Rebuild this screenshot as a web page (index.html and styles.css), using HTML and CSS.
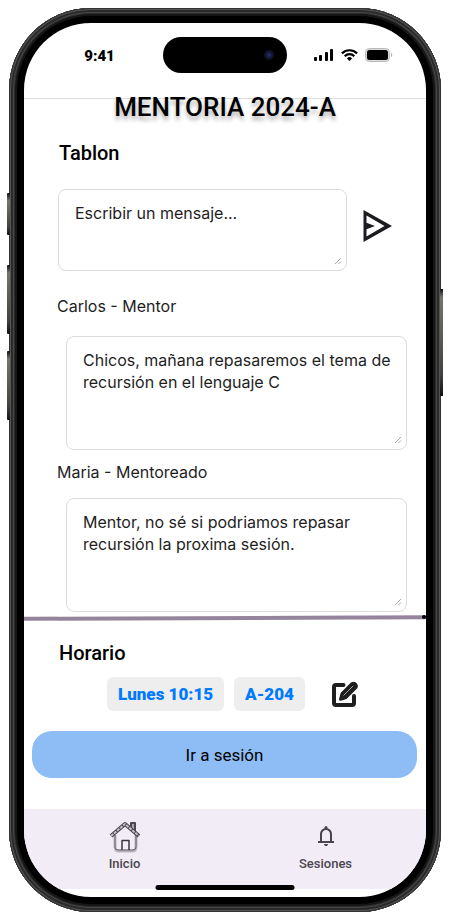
FILE: index.html
```html
<!DOCTYPE html>
<html lang="es">
<head>
<meta charset="utf-8">
<meta name="viewport" content="width=device-width, initial-scale=1">
<title>Mentoria 2024-A</title>
<link rel="stylesheet" href="styles.css">
</head>
<body>
<div class="phone">
  <span class="key key-action"></span>
  <span class="key key-up"></span>
  <span class="key key-down"></span>
  <span class="key key-power"></span>
  <div class="screen">
    <header class="status">
      <span class="clock">9:41</span>
      <span class="island"><span class="camera"></span></span>
      <span class="signals">
        <svg width="20" height="12" viewBox="0 0 20 12" aria-hidden="true"><rect x="0" y="8" width="3" height="4" rx="1"/><rect x="5" y="6" width="3" height="6" rx="1"/><rect x="11" y="3" width="3" height="9" rx="1"/><rect x="16" y="0" width="3" height="12" rx="1"/></svg>
        <svg width="17" height="12" viewBox="0 0 17 12" aria-hidden="true"><g fill="none" stroke="#000" stroke-width="2.200"><path d="M.9 4.400a10.800 10.800 0 0 1 15.200 0"/><path d="M3.700 7.200a6.800 6.800 0 0 1 9.600 0"/></g><path d="M8.500 12 5.900 9.400a3.700 3.700 0 0 1 5.200 0z"/></svg>
        <svg width="28" height="14" viewBox="0 0 28 14" aria-hidden="true"><rect x=".5" y=".5" width="24" height="13" rx="4" fill="#ddd" stroke="#b9b9b9"/><rect x="2" y="2" width="21" height="10" rx="2.500"/><path d="M26 4.700c1.600.6 1.600 4 0 4.600z" fill="#b5b5b5"/></svg>
      </span>
    </header>
    <main>
      <h1>MENTORIA 2024-A</h1>
      <section class="board">
        <h2>Tablon</h2>
        <form class="composer">
          <div class="field">
            <textarea class="box" aria-label="Mensaje" placeholder="Escribir un mensaje..."></textarea>
            <svg class="grip" width="8" height="8" viewBox="0 0 8 8" aria-hidden="true"><path d="M1 7 7 1M4.500 7 7 4.500"/></svg>
          </div>
          <button class="icon-button send" type="button" aria-label="Enviar">
            <svg width="30" height="34" viewBox="0 0 30 34" aria-hidden="true"><path fill="#1d1b20" fill-rule="evenodd" d="M.5 1v32L29 17zM3.500 6.600 21.500 17 3.500 27.400V20.200L12 17 3.500 13.800z"/></svg>
          </button>
        </form>
        <label class="author" for="msg-carlos">Carlos - Mentor</label>
        <div class="field message first">
          <textarea class="box tall" id="msg-carlos" readonly>Chicos, mañana repasaremos el tema de recursión en el lenguaje C</textarea>
          <svg class="grip" width="8" height="8" viewBox="0 0 8 8" aria-hidden="true"><path d="M1 7 7 1M4.500 7 7 4.500"/></svg>
        </div>
        <label class="author next" for="msg-maria">Maria - Mentoreado</label>
        <div class="field message">
          <textarea class="box tall" id="msg-maria" readonly>Mentor, no sé si podriamos repasar recursión la proxima sesión.</textarea>
          <svg class="grip" width="8" height="8" viewBox="0 0 8 8" aria-hidden="true"><path d="M1 7 7 1M4.500 7 7 4.500"/></svg>
        </div>
      </section>
      <div class="divider">
        <svg class="rule" viewBox="0 0 402 6" preserveAspectRatio="none" aria-hidden="true"><path d="M0 3.800 402 2.200" stroke="#95859c" stroke-width="4"/></svg>
        <span class="dot"></span>
      </div>
      <section class="schedule">
        <h2>Horario</h2>
        <div class="slots">
          <span class="chip">Lunes 10:15</span>
          <span class="chip">A-204</span>
          <button class="icon-button edit" type="button" aria-label="Editar horario">
            <svg width="28" height="28" viewBox="0 0 28 28" aria-hidden="true"><path d="M12.500 5H5Q3 5 3 7v16q0 2 2 2h16q2 0 2-2v-7" fill="none" stroke="#1e1e1e" stroke-width="4" stroke-linecap="round" stroke-linejoin="round"/><path d="M21 3.500a3 3 0 0 1 4 4L15 17.500l-5.500 1.800 1.600-5.800z" fill="#1e1e1e" stroke="#1e1e1e" stroke-width="3" stroke-linejoin="round"/><path d="M22 6 12.500 15.500" stroke="#fff" stroke-opacity=".6" fill="none"/></svg>
          </button>
        </div>
      </section>
      <button class="join" type="button">Ir a sesión</button>
    </main>
    <nav class="tabs">
      <a class="tab" href="#inicio">
        <svg width="32" height="32" viewBox="0 0 32 32" aria-hidden="true"><g fill="none" stroke-linejoin="round"><path d="M6 14v12q0 4 4 4h13q4 0 4-4V14" stroke="#bab6be" stroke-width="3"/><path d="M6 14v12q0 3 3 3h15q3 0 3-3V14" stroke="#66636b"/><path d="M22 7V2h4v9" fill="#aaa6ad" stroke="#4a474e" stroke-width="2"/><path d="M2 15 16 3l14 12" stroke="#4a474e" stroke-width="4"/><path d="M2 15 16 3l14 12" stroke="#c2bec6" stroke-width="2" stroke-dasharray="3 1"/><path d="M13 29V19.500h7V29" stroke="#39363d" stroke-width="1.500"/></g></svg>
        <span>Inicio</span>
      </a>
      <a class="tab" href="#sesiones">
        <svg width="24" height="32" viewBox="0 -2 24 32" aria-hidden="true"><path fill="#49454f" d="M4 20v-2h2v-7q0-2.075 1.250-3.687Q8.500 5.700 10.500 5.200v-.7q0-.625.438-1.062Q11.375 3 12 3t1.063.438Q13.500 3.875 13.500 4.500v.7q2 .5 3.250 2.113Q18 8.925 18 11v7h2v2zm8 3q-.825 0-1.412-.587Q10 21.825 10 21h4q0 .825-.587 1.413Q12.825 23 12 23m-4-5h8v-7q0-1.650-1.175-2.825Q13.650 7 12 7t-2.825 1.175Q8 9.350 8 11z"/></svg>
        <span>Sesiones</span>
      </a>
    </nav>
    <span class="home-bar"></span>
  </div>
</div>
</body>
</html>
```

FILE: styles.css
```css
* {
  box-sizing: border-box;
}

body {
  margin: 0;
  padding: 8px 9px;
  background: #fff;
  color: #000;
  font-family: Roboto, "Liberation Sans", sans-serif;
}

h1,
h2 {
  margin: 0;
  font-weight: 500;
}

button {
  border: 0;
  font: inherit;
  color: inherit;
  cursor: pointer;
}

svg {
  display: block;
}

/* Device frame */
.phone {
  position: relative;
  max-width: 480px;
  margin: 0 auto;
  padding: 15px;
  border-radius: 82px;
  background: #000;
  box-shadow:
    inset 0 0 0 1px #333,
    inset 0 0 0 2px #555,
    inset 0 0 0 4px #2a2a2a,
    inset 0 0 0 5px #484848,
    inset 0 0 0 6px #2c2c2c,
    inset 0 0 0 8px #161616;
}

.key {
  position: absolute;
  left: -2px;
  width: 3px;
  border-radius: 1px 0 0 1px;
  background: linear-gradient(#111, #77746d 8px, #44423e 80%, #111);
}

.key-action {
  top: 185px;
  height: 42px;
}

.key-up {
  top: 257px;
  height: 69px;
}

.key-down {
  top: 343px;
  height: 69px;
}

.key-power {
  top: 281px;
  right: -2px;
  left: auto;
  height: 107px;
}

.screen {
  position: relative;
  overflow: hidden;
  padding-bottom: 8px;
  border-radius: 67px;
  background: #fff;
}

/* Status bar */
.status {
  display: grid;
  grid-template-columns: 1fr 124px 1fr;
  align-items: start;
  height: 76px;
  padding-top: 14px;
  border-bottom: 1px solid #ddd;
}

.clock {
  padding-left: 12px;
  font-size: 15px;
  font-weight: 900;
  line-height: 38px;
  text-align: center;
}

.island {
  display: flex;
  align-items: center;
  justify-content: flex-end;
  height: 36px;
  padding-right: 13px;
  border-radius: 18px;
  background: #000;
}

.camera {
  width: 10px;
  height: 10px;
  border-radius: 50%;
  background: radial-gradient(#24306e, #10142f 50%, #08070d);
}

.signals {
  display: flex;
  align-items: center;
  justify-content: center;
  gap: 7px;
  height: 36px;
  padding-right: 6px;
}

/* Board */
h1 {
  margin-top: -6px;
  font-size: 26px;
  line-height: 28px;
  text-align: center;
  text-shadow: 0 4px 4px rgba(0, 0, 0, 0.3);
}

h2 {
  padding-left: 2px;
  font-size: 20px;
  line-height: 24px;
}

.board {
  padding: 20px 19px 0 33px;
}

.composer {
  display: flex;
  align-items: flex-start;
  gap: 16px;
  margin: 24px 14px 25px 1px;
}

.field {
  position: relative;
  flex: 1;
}

.box {
  display: block;
  width: 100%;
  height: 82px;
  padding: 12px 12px 12px 16px;
  border: 1px solid #dcdcdc;
  border-radius: 8px;
  outline: 0;
  background: #fff;
  color: #1e1e1e;
  font-family: Inter, "Liberation Sans", sans-serif;
  font-size: 16px;
  line-height: 22px;
  resize: none;
}

.box.tall {
  height: 114px;
}

.box::placeholder {
  color: #1e1e1e;
  opacity: 1;
}

.grip {
  position: absolute;
  right: 5px;
  bottom: 6px;
  fill: none;
  stroke: #aaa;
}

.icon-button {
  padding: 0;
  background: none;
}

.send {
  margin-top: 20px;
}

.author {
  display: block;
  margin-top: -1px;
  color: #1e1e1e;
  font-family: Inter, "Liberation Sans", sans-serif;
  font-size: 16px;
  line-height: 22px;
}

.author.next {
  margin-top: 11px;
}

.message {
  margin: 15px 0 0 9px;
}

.message.first {
  margin-top: 19px;
}

/* Divider */
.divider {
  position: relative;
  margin-top: 3px;
}

.rule {
  width: 100%;
  height: 6px;
}

.dot {
  position: absolute;
  top: 0;
  right: 0;
  width: 4px;
  height: 4px;
  border-radius: 50%;
  background: #000;
}

/* Schedule */
.schedule {
  padding: 20px 33px 0;
}

.slots {
  display: flex;
  align-items: center;
  justify-content: center;
  gap: 10px;
  margin-top: 12px;
  padding-left: 16px;
}

.chip {
  padding: 0 11px;
  border-radius: 6px;
  background: #eee;
  color: #007aff;
  font-size: 17px;
  font-weight: 900;
  line-height: 34px;
}

.edit {
  margin-left: 16px;
}

.join {
  display: block;
  width: calc(100% - 17px);
  height: 47px;
  margin: 20px 9px 31px 8px;
  border-radius: 20px;
  background: #8dbdf4;
  font-size: 17px;
}

/* Bottom navigation */
.tabs {
  display: grid;
  grid-template-columns: 1fr 1fr;
  height: 80px;
  padding-top: 12px;
  background: #f2ecf7;
}

.tab {
  display: flex;
  flex-direction: column;
  align-items: center;
  gap: 3px;
  color: #49454f;
  font-size: 13px;
  font-weight: 500;
  line-height: 16px;
  text-decoration: none;
}

.home-bar {
  position: absolute;
  bottom: 7px;
  left: 50%;
  width: 139px;
  height: 5px;
  border-radius: 3px;
  background: #000;
  transform: translateX(-50%);
}
```
